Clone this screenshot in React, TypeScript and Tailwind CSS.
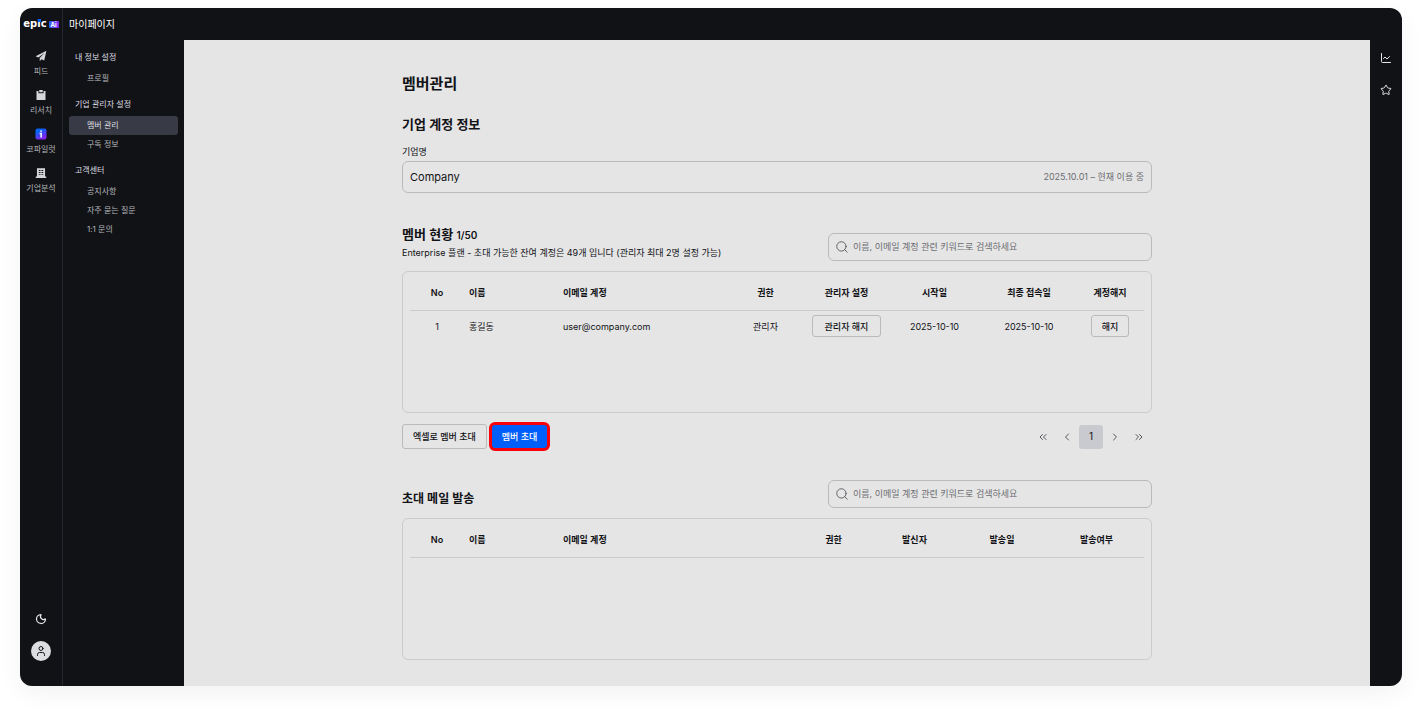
import type { ReactNode } from 'react';
import { ChartLine, ChevronLeft, ChevronRight, ChevronsLeft, ChevronsRight, Moon, Search, Star, User } from 'lucide-react';

const feedIcon = (
  <svg viewBox="0 0 16 16" className="size-3 fill-[#d5d6d9]">
    <path d="M15.2 1 .8 8.3l3.7 1.6L12.6 4 6.3 10.7v4.2l2.3-2.7 3.7 1.7z" />
  </svg>
);

const researchIcon = (
  <svg viewBox="0 0 16 16" className="size-3">
    <path className="fill-[#d5d6d9]" d="M2 2.5h2.6v3h6.8v-3H14v12.3H2z" />
    <path className="fill-[#d5d6d9]" d="M5.7 1.2h4.6v3H5.7z" />
  </svg>
);

const copilotIcon = (
  <svg viewBox="0 0 12 12" className="size-3">
    <defs>
      <linearGradient id="copilot" x1="0.2" y1="0" x2="0.8" y2="1">
        <stop offset="0.2" stopColor="#0565f5" />
        <stop offset="0.9" stopColor="#8a1ff0" />
      </linearGradient>
    </defs>
    <rect x="0.5" y="0.5" width="11" height="11" rx="2" fill="url(#copilot)" />
    <path d="M5.2 2.4h1.7v1.4H5.2zM4.6 4.8h2.3v4.6H5.4V6h-.8z" fill="#fff" />
  </svg>
);

const analysisIcon = (
  <svg viewBox="0 0 16 16" className="size-3">
    <path className="fill-[#d5d6d9]" d="M2.6 1.5h10.8v11.3H15v1.8H1v-1.8h1.6z" />
    <path className="fill-[#111216]" d="M5 4h2.4v1.2H5zM8.6 4H11v1.2H8.6zM5 6.8h2.4V8H5zM8.6 6.8H11V8H8.6zM5 9.6h2.4v1.2H5zM8.6 9.6H11v1.2H8.6z" />
  </svg>
);

const railItems = [
  { icon: feedIcon, label: '피드' },
  { icon: researchIcon, label: '리서치' },
  { icon: copilotIcon, label: '코파일럿' },
  { icon: analysisIcon, label: '기업분석' },
];

const menu = [
  { title: '내 정보 설정', items: ['프로필'] },
  { title: '기업 관리자 설정', items: ['멤버 관리', '구독 정보'] },
  { title: '고객센터', items: ['공지사항', '자주 묻는 질문', '1:1 문의'] },
];

type Column = { label: string; className: string };

const memberColumns: Column[] = [
  { label: 'No', className: 'w-[54px]' },
  { label: '이름', className: 'w-[94px] text-left' },
  { label: '이메일 계정', className: 'text-left' },
  { label: '권한', className: 'w-[81px]' },
  { label: '관리자 설정', className: 'w-[81px]' },
  { label: '시작일', className: 'w-[95px]' },
  { label: '최종 접속일', className: 'w-[94px]' },
  { label: '계정해지', className: 'w-[68px]' },
];

const inviteColumns: Column[] = [
  { label: 'No', className: 'w-[54px]' },
  { label: '이름', className: 'w-[94px] text-left' },
  { label: '이메일 계정', className: 'text-left' },
  { label: '권한', className: 'w-[81px]' },
  { label: '발신자', className: 'w-[81px]' },
  { label: '발송일', className: 'w-[94px]' },
  { label: '발송여부', className: 'w-[95px]' },
];

function SearchBox({ id }: { id: string }) {
  return (
    <label htmlFor={id} className="flex h-7 w-[324px] items-center gap-1 rounded-md border border-[#b9babd] px-1.5">
      <Search size={14} strokeWidth={1.5} className="shrink-0 text-[#55565b]" />
      <input
        id={id}
        type="text"
        aria-label="검색"
        placeholder="이름, 이메일 계정 관련 키워드로 검색하세요"
        className="min-w-0 flex-1 bg-transparent text-[9px] outline-none placeholder:text-[#6c6d72]"
      />
    </label>
  );
}

function DataTable({ columns, children }: { columns: Column[]; children?: ReactNode }) {
  return (
    <div className="min-h-[142px] rounded-md border border-[#cacbcc] pt-1 pr-[7px] pl-[7px]">
      <table className="w-full table-fixed border-collapse text-center text-[9px]">
        <thead>
          <tr className="h-[34px] border-b border-[#cacbcc]">
            {columns.map((c) => (
              <th key={c.label} className={`px-[5px] font-semibold ${c.className}`}>{c.label}</th>
            ))}
          </tr>
        </thead>
        <tbody>{children}</tbody>
      </table>
    </div>
  );
}

export default function App() {
  return (
    <div className="flex min-h-screen flex-col bg-white px-5 pt-2 pb-8 font-['Inter','Noto_Sans_CJK_KR',sans-serif] text-[#111216]">
      <div className="flex flex-1 overflow-hidden rounded-xl bg-[#111216] shadow-[0_8px_24px_rgba(0,0,0,0.05)]">

        {/* Icon rail */}
        <nav className="flex w-[43px] shrink-0 flex-col items-center border-r border-[#26272f] pb-[25px]">
          <a href="#" className="flex h-8 items-center gap-0.5 text-white">
            <span className="relative font-['DejaVu_Sans',sans-serif] text-[10px] leading-4 font-bold">
              epic
              <span className="absolute top-[3px] right-1.5 size-[3px] bg-[#0565f5]" />
            </span>
            <span className="rounded-[1px] bg-linear-to-r from-[#0565f5] to-[#8a1ff0] px-0.5 text-[6px] leading-[7px] font-bold">Ai</span>
          </a>
          <div className="mt-2.5 flex flex-col gap-3">
            {railItems.map((item) => (
              <a key={item.label} href="#" className="flex flex-col items-center gap-[3px] text-[8px] leading-3 whitespace-nowrap text-[#b4b5ba]">
                {item.icon}
                {item.label}
              </a>
            ))}
          </div>
          <button aria-label="다크 모드" className="mt-auto text-[#e5e5e6]">
            <Moon size={12} strokeWidth={2.5} />
          </button>
          <button aria-label="내 계정" className="mt-4 flex size-5 items-center justify-center rounded-full bg-[#dcdde1]">
            <User size={12} strokeWidth={2} />
          </button>
        </nav>

        {/* My page menu */}
        <aside className="w-[121px] shrink-0 px-1.5">
          <p className="text-[10px] leading-8 text-white">마이페이지</p>
          <div className="mt-2 flex flex-col gap-[7px] text-[8px]">
            {menu.map((group) => (
              <div key={group.title}>
                <h2 className="mb-[3px] px-1.5 leading-[18px] text-[#dcdde1]">{group.title}</h2>
                {group.items.map((item) => (
                  <a
                    key={item}
                    href="#"
                    className={`block rounded-[3px] pl-[18px] leading-[19px] ${item === '멤버 관리' ? 'bg-[#383b45] text-[#dcdde1]' : 'text-[#b4b5ba]'}`}
                  >
                    {item}
                  </a>
                ))}
              </div>
            ))}
          </div>
        </aside>

        <main className="mt-8 flex-1 bg-[#e5e5e5]">
          <div className="mx-auto max-w-[750px] pt-8 pb-6">
            <h1 className="text-[15px] leading-6 font-bold">멤버관리</h1>

            {/* Company account */}
            <section className="mt-[18px]">
              <h2 className="text-[13px] leading-5 font-semibold">기업 계정 정보</h2>
              <p className="mt-2.5 text-[9px] leading-4">기업명</p>
              <div className="mt-px flex h-8 items-center justify-between rounded-md border border-[#b9babd] px-[7px]">
                <span className="text-[11px]">Company</span>
                <span className="text-[9px] text-[#6c6d72]">2025.10.01 – 현재 이용 중</span>
              </div>
            </section>

            {/* Members */}
            <section className="mt-[31px]">
              <div className="flex items-end justify-between">
                <div>
                  <h2 className="text-[13px] leading-5 font-semibold">
                    멤버 현황 <span className="text-[10px]">1/50</span>
                  </h2>
                  <p className="text-[9px] leading-4">Enterprise 플랜 - 초대 가능한 잔여 계정은 49개 입니다 (관리자 최대 2명 설정 가능)</p>
                </div>
                <SearchBox id="member-search" />
              </div>
              <div className="mt-2.5">
                <DataTable columns={memberColumns}>
                  <tr className="h-8">
                    <td>1</td>
                    <td className="px-[5px] text-left">홍길동</td>
                    <td className="px-[5px] text-left">user@company.com</td>
                    <td>관리자</td>
                    <td>
                      <button className="h-[22px] rounded-[3px] border border-[#b9babd] px-3 font-medium">관리자 해지</button>
                    </td>
                    <td>2025-10-10</td>
                    <td>2025-10-10</td>
                    <td>
                      <button className="h-[22px] rounded-[3px] border border-[#b9babd] px-2.5 font-medium">해지</button>
                    </td>
                  </tr>
                </DataTable>
              </div>

              <div className="mt-[9px] flex items-center justify-between">
                <div className="flex items-center gap-0.5 text-[9px] font-medium">
                  <button className="h-[25px] rounded-[3px] border border-[#b9babd] px-2.5">엑셀로 멤버 초대</button>
                  <button className="h-[29px] rounded-md border-3 border-[#fa0008] bg-[#005ff8] px-2.5 text-white">멤버 초대</button>
                </div>
                <div className="flex pr-px text-[#55565b]">
                  <button aria-label="처음" className="flex size-6 items-center justify-center"><ChevronsLeft size={12} strokeWidth={2} /></button>
                  <button aria-label="이전" className="flex size-6 items-center justify-center"><ChevronLeft size={12} strokeWidth={2} /></button>
                  <button className="size-6 rounded-[3px] bg-[#c9cad0] text-[10px] text-[#111216]">1</button>
                  <button aria-label="다음" className="flex size-6 items-center justify-center"><ChevronRight size={12} strokeWidth={2} /></button>
                  <button aria-label="마지막" className="flex size-6 items-center justify-center"><ChevronsRight size={12} strokeWidth={2} /></button>
                </div>
              </div>
            </section>

            {/* Invitation mails */}
            <section className="mt-[29px]">
              <div className="flex items-end justify-between">
                <h2 className="text-[12px] leading-[18px] font-semibold">초대 메일 발송</h2>
                <SearchBox id="invite-search" />
              </div>
              <div className="mt-2.5">
                <DataTable columns={inviteColumns} />
              </div>
            </section>
          </div>
        </main>

        {/* Right tools */}
        <div className="flex w-8 shrink-0 flex-col items-center gap-5 pt-11 text-[#e5e5e6]">
          <button aria-label="차트"><ChartLine size={12} strokeWidth={2} /></button>
          <button aria-label="즐겨찾기"><Star size={12} strokeWidth={2} /></button>
        </div>
      </div>
    </div>
  );
}
